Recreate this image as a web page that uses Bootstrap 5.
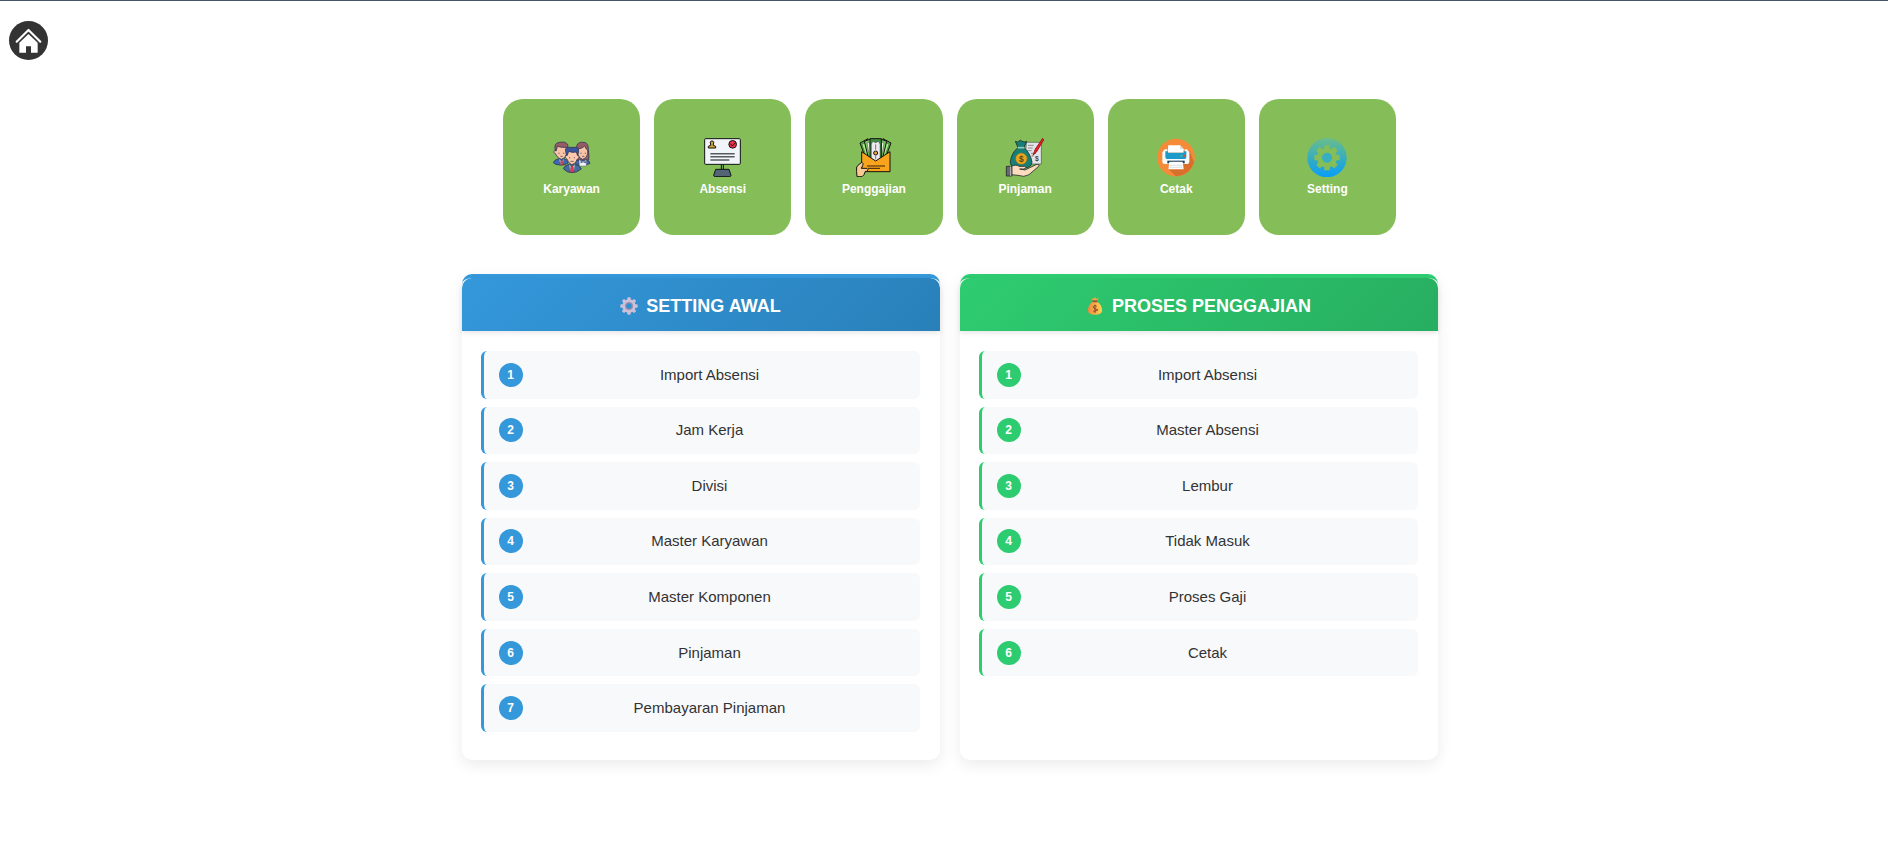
<!DOCTYPE html>
<html lang="id">
<head>
<meta charset="utf-8">
<meta name="viewport" content="width=device-width, initial-scale=1">
<title>Penggajian</title>
<link rel="stylesheet" href="https://cdn.jsdelivr.net/npm/bootstrap@5.3.0/dist/css/bootstrap.min.css">
<style>
  body { font-family: "Liberation Sans", Arial, sans-serif; color: #333; border-top: 1px solid #44546a; background: #fff; }
  .home-link { width: 40px; height: 40px; }
  .home-link svg, .tile-link svg { display: block; width: 40px; height: 40px; }
  .page-main { padding: 38px 0 40px 11px; }
  .tile-row { max-width: 893px; gap: 14px; }
  .tile-link { flex: 1 1 0; min-width: 100px; height: 136px; border-radius: 20px; background: #85bd58; color: #fff; gap: 3px; font-size: 12px; line-height: 18px; font-weight: 700; }
  .tile-link:hover { background: #79b04c; color: #fff; }
  .panel-row { max-width: 976px; gap: 20px; margin-top: 39px; }
  .panel { --tone: #3498db; --tone-dark: #2980b9; flex: 1 1 320px; border-top: 4px solid var(--tone); border-radius: 10px; box-shadow: 0 5px 15px rgba(0,0,0,.08); background: #fff; padding-bottom: 28px; }
  .panel-green { --tone: #2ecc71; --tone-dark: #27ae60; }
  .panel-title { min-height: 53px; padding-top: 2px; border-radius: 10px 10px 0 0; background: linear-gradient(135deg, var(--tone), var(--tone-dark)); box-shadow: 0 2px 5px rgba(0,0,0,.1); font-size: 18px; line-height: 22px; font-weight: 700; gap: 8px; }
  .panel-title svg { width: 18px; height: 18px; }
  .steps { display: grid; grid-template-rows: repeat(7, 1fr); gap: 8px; min-height: 381px; margin: 20px 20px 0 19px; }
  .step { border-left: 3px solid var(--tone); border-radius: 6px; background: #f8f9fb; padding: 0 23px 0 15px; font-size: 15px; line-height: 24px; }
  .step-no { width: 24px; height: 24px; background: var(--tone); font-size: 12px; }
</style>
</head>
<body>
<header class="d-flex px-2 pt-3 mt-1">
  <a class="home-link" href="#" aria-label="Beranda">
    <svg viewBox="24 63 120 120"><circle cx="85.500" cy="121.500" r="58.500" fill="#333"/><path d="M58 158V128L85.500 102 113 128V158H93V139H78V158Z" fill="#fff"/><path d="M50 125 85.500 90 121 125" fill="none" stroke="#fff" stroke-width="6.500" stroke-linecap="round" stroke-linejoin="round"/></svg>
  </a>
</header>
<main class="page-main">
  <nav class="tile-row d-flex mx-auto" aria-label="Menu utama">
    <a class="tile-link d-flex flex-column align-items-center justify-content-center text-decoration-none" href="#">
      <svg viewBox="50 36 120 120" stroke="#343a55" stroke-width="2.500" stroke-linejoin="round" aria-hidden="true">
        <path d="M54 113Q56 104 71 101H87Q97 105 99 114 86 122 73 120 60 120 54 113Z" fill="#3e67b5"/>
        <path d="M71 101 79 108 86 101 82 119H75Z" fill="#e5edf5" stroke-width="1"/><path d="M76 106H82L83 120H75Z" fill="#d94155" stroke-width="1"/>
        <path d="M61 77C53 74 55 86 62 88Q65 100 78 103 90 100 94 88C100 85 99 75 94 77V62H62Z" fill="#fbc4a6"/>
        <path d="M60 77Q54 53 73 52 91 48 98 60L96 75 92 67Q76 68 66 64L63 77Z" fill="#965b65"/>
        <path d="M119 114Q123 105 135 102H148Q162 105 164 115 151 124 131 121Z" fill="#3e67b5"/>
        <path d="M124 70C123 54 133 51 142 52 156 51 159 61 159 73Q162 96 160 105H124Z" fill="#965b65"/>
        <path d="M131 104 143 110 153 104V123H132Z" fill="#eef4f7" stroke-width="1"/><path d="m136 108 7 4 8-4v7l-8-4-7 4Z" fill="#343a55" stroke="none"/>
        <path d="M128 71Q140 72 148 63 153 75 157 75V87Q153 101 142 103 130 100 127 87Z" fill="#fbc4a6"/>
        <path d="M84 131Q86 122 101 118H120Q136 122 138 132 125 143 110 143 94 143 84 131Z" fill="#436ca0"/>
        <path d="M101 118 110 127 119 118 116 141H105Z" fill="#e5edf5" stroke-width="1"/><path d="M107 122H113L117 142H104Z" fill="#e03953" stroke-width="1"/>
        <path d="M94 91C87 89 90 102 95 102Q99 116 110 119 122 116 126 102C132 102 133 89 126 91V78H95Z" fill="#ffc9ac"/>
        <path d="M93 91 90 72Q94 65 106 67H124Q131 69 130 78L127 91 123 81Q109 84 100 79L96 91Z" fill="#3b569b"/>
        <path d="M71 83V87M85 83V87M137 83V87M150 83V87M103 96V100M117 96V100M105 109H115M75 94H82M140 94H147" fill="none" stroke-width="2"/>
      </svg>
      <span>Karyawan</span>
    </a>
    <a class="tile-link d-flex flex-column align-items-center justify-content-center text-decoration-none" href="#">
      <svg viewBox="54 36 120 120" stroke="#101216" stroke-width="3" stroke-linejoin="round" aria-hidden="true">
        <path d="M109 115V135M115 115V135" fill="none"/><path d="M92 133H132L138 151Q138 155 133 155H92Q86 155 86 151Z" fill="#536575"/>
        <rect x="59" y="41" width="107" height="77" rx="3" fill="#f1f5f9"/>
        <path d="M70 69V64L77 61V57Q73 48 81 48 89 48 85 57V61L92 64V69Z" fill="#d3a42d"/>
        <circle cx="143" cy="58" r="11.500" fill="#ee3048"/><path d="m136 57 6 5 10-9" fill="none"/>
        <path d="M76 86H149M76 95H149M76 105H133" fill="none" stroke="#575c63" stroke-width="4.500"/>
      </svg>
      <span>Absensi</span>
    </a>
    <a class="tile-link d-flex flex-column align-items-center justify-content-center text-decoration-none" href="#">
      <svg viewBox="49 36 120 120" stroke="#17130f" stroke-width="3" stroke-linejoin="round" aria-hidden="true">
        <path d="M67 54 91 41 108 103H85Z" fill="#4fae4c"/><path d="M160 54 136 41 119 103H142Z" fill="#4fae4c"/>
        <path d="M73 58 82 53 97 98H87ZM154 58 145 53 130 98H140Z" fill="#a5ed83" stroke-width="1"/>
        <path d="M80 49 99 42 109 107H94Z" fill="#79c761"/><path d="M147 49 128 42 119 107H133Z" fill="#79c761"/>
        <path d="M88 54 95 51 103 101H97ZM139 54 132 51 125 101H131Z" fill="#e4eddf" stroke-width="1"/>
        <path d="M97 41H131V98L114 110 97 98Z" fill="#3f8e43"/><path d="M106 49Q114 57 122 49L127 57V101L114 109 101 101V57Z" fill="#eceaf0" stroke-width="1"/>
        <path d="M114 58V74M114 92V103" fill="none" stroke="#777"/><circle cx="114" cy="84" r="6" fill="#eda62c"/>
        <path d="M72 80 114 108 157 80V140H72Z" fill="#faa41d"/>
        <path d="M88 123H142M91 130H127" fill="none" stroke="#38220d"/>
        <path d="M58 155Q56 139 57 126L65 117 73 112Q79 115 75 122L71 130H88Q94 134 88 139H83Q80 151 73 155Z" fill="#f8cb94"/>
      </svg>
      <span>Penggajian</span>
    </a>
    <a class="tile-link d-flex flex-column align-items-center justify-content-center text-decoration-none" href="#">
      <svg viewBox="52 36 120 120" stroke="#252b2e" stroke-width="2.500" stroke-linejoin="round" aria-hidden="true">
        <path d="M116 52H161V117H113Z" fill="#e3e6e9" stroke-width="1.500"/><path d="M121 61H138M121 69H135M119 77H132M130 85H145M131 93H138" fill="none" stroke="#777"/>
        <path d="m165 40-22 32-7 19 11-11 21-35Z" fill="#f31d24" stroke="#8a1019"/>
        <text x="142" y="109" font-size="20" font-weight="700" fill="#444" stroke="none">$</text>
        <path d="M91 68 83 49Q91 53 93 49 99 42 103 49 109 53 117 49L109 68Q128 84 133 111 132 128 110 129H82Q67 124 68 109 73 81 91 68Z" fill="#168078"/>
        <path d="M90 68H110" fill="none" stroke="#9bc6bd" stroke-width="5"/><circle cx="101" cy="101" r="17" fill="#eba51b" stroke="#9a741b" stroke-width="1.500"/>
        <text x="101" y="110" text-anchor="middle" font-size="25" font-weight="700" fill="#4c421b" stroke="none">$</text>
        <path d="M71 124Q86 117 94 124H111Q120 127 109 132H96L112 135 145 119Q157 116 153 124L124 149Q109 158 91 151L71 149Z" fill="#ffdcbf"/>
        <path d="M56 124H73V153H56Z" fill="#66686e"/><path d="M69 124V153" fill="none" stroke="#ccc"/>
      </svg>
      <span>Pinjaman</span>
    </a>
    <a class="tile-link d-flex flex-column align-items-center justify-content-center text-decoration-none" href="#">
      <svg viewBox="50 36 120 120" aria-hidden="true">
        <circle cx="110" cy="98" r="56.500" fill="#f58a38"/><path d="m151 78 13 34Q151 151 110 154L84 129Z" fill="#d8702c"/>
        <path d="M89 61H122L133 72V83H86V65Q86 61 89 61Z" fill="#fff"/><path d="M122 61V72H133Z" fill="#d7dee1"/>
        <path d="M76 73H84V86H136V73H143L150 82V110Q150 117 143 117H76Q69 117 69 110V82Z" fill="#f8fafb"/>
        <path d="M78 79H86V83H133V79H141V97Q141 102 136 102H83Q78 102 78 97Z" fill="#1b9bc9"/>
        <path d="M84 107H136V115H84Z" fill="#183f5c"/><path d="M90 110H130L133 133H87Z" fill="#fff"/><path d="M92 121H128M91 127H129" stroke="#c7d0d5" stroke-width="2"/>
        <circle cx="126" cy="92" r="3" fill="#79b347"/><circle cx="135" cy="92" r="3" fill="#ed4638"/>
      </svg>
      <span>Cetak</span>
    </a>
    <a class="tile-link d-flex flex-column align-items-center justify-content-center text-decoration-none" href="#">
      <svg viewBox="53 36 120 120" aria-hidden="true">
        <defs><linearGradient id="gearFade" x1="0" y1="0" x2="0" y2="1"><stop stop-color="#6abd8a"/><stop offset=".5" stop-color="#38aebe"/><stop offset="1" stop-color="#079dfb"/></linearGradient></defs>
        <circle cx="113" cy="98" r="59" fill="url(#gearFade)"/>
        <g fill="#85bd58"><circle cx="113" cy="98" r="30"/><g id="gearTeeth"><rect x="105" y="60" width="16" height="76" rx="2"/><rect x="75" y="90" width="76" height="16" rx="2"/></g><use href="#gearTeeth" transform="rotate(45 113 98)"/></g>
        <circle cx="113" cy="98" r="15" fill="#37afc0"/>
      </svg>
      <span>Setting</span>
    </a>
  </nav>

  <div class="panel-row d-flex flex-wrap mx-auto">
    <section class="panel">
      <h2 class="panel-title d-flex align-items-center justify-content-center text-white mb-0">
        <svg viewBox="0 0 54 54" aria-hidden="true"><g fill="#cdc1da"><circle cx="27" cy="27" r="20"/><g id="cogTeeth"><rect x="22" y="1" width="10" height="52" rx="3"/><rect x="1" y="22" width="52" height="10" rx="3"/></g><use href="#cogTeeth" transform="rotate(45 27 27)"/></g><circle cx="27" cy="27" r="10" fill="#2f91d0" stroke="#9d90b0" stroke-width="4"/></svg>
        <span>SETTING AWAL</span>
      </h2>
      <ol class="steps list-unstyled mb-0">
        <li class="step d-flex align-items-center"><span class="step-no rounded-circle d-flex align-items-center justify-content-center text-white fw-bold">1</span><span class="flex-fill text-center">Import Absensi</span></li>
        <li class="step d-flex align-items-center"><span class="step-no rounded-circle d-flex align-items-center justify-content-center text-white fw-bold">2</span><span class="flex-fill text-center">Jam Kerja</span></li>
        <li class="step d-flex align-items-center"><span class="step-no rounded-circle d-flex align-items-center justify-content-center text-white fw-bold">3</span><span class="flex-fill text-center">Divisi</span></li>
        <li class="step d-flex align-items-center"><span class="step-no rounded-circle d-flex align-items-center justify-content-center text-white fw-bold">4</span><span class="flex-fill text-center">Master Karyawan</span></li>
        <li class="step d-flex align-items-center"><span class="step-no rounded-circle d-flex align-items-center justify-content-center text-white fw-bold">5</span><span class="flex-fill text-center">Master Komponen</span></li>
        <li class="step d-flex align-items-center"><span class="step-no rounded-circle d-flex align-items-center justify-content-center text-white fw-bold">6</span><span class="flex-fill text-center">Pinjaman</span></li>
        <li class="step d-flex align-items-center"><span class="step-no rounded-circle d-flex align-items-center justify-content-center text-white fw-bold">7</span><span class="flex-fill text-center">Pembayaran Pinjaman</span></li>
      </ol>
    </section>
    <section class="panel panel-green">
      <h2 class="panel-title d-flex align-items-center justify-content-center text-white mb-0">
        <svg viewBox="0 0 54 54" aria-hidden="true"><defs><linearGradient id="bagGold"><stop stop-color="#ef8742"/><stop offset="1" stop-color="#ffd34f"/></linearGradient></defs><path d="m20 11-3-7 7 1 3-5 4 5 7-1-4 7Z" fill="#f3a742"/><path d="M20 14C9 22 5 32 6 42Q7 53 27 53T48 42C49 30 44 21 34 14Z" fill="url(#bagGold)"/><path d="M20 13H34" stroke="#9b563b" stroke-width="6"/><path d="M32 28Q23 23 22 29T32 37 22 43M27 23V48" fill="none" stroke="#85472e" stroke-width="3"/></svg>
        <span>PROSES PENGGAJIAN</span>
      </h2>
      <ol class="steps list-unstyled mb-0">
        <li class="step d-flex align-items-center"><span class="step-no rounded-circle d-flex align-items-center justify-content-center text-white fw-bold">1</span><span class="flex-fill text-center">Import Absensi</span></li>
        <li class="step d-flex align-items-center"><span class="step-no rounded-circle d-flex align-items-center justify-content-center text-white fw-bold">2</span><span class="flex-fill text-center">Master Absensi</span></li>
        <li class="step d-flex align-items-center"><span class="step-no rounded-circle d-flex align-items-center justify-content-center text-white fw-bold">3</span><span class="flex-fill text-center">Lembur</span></li>
        <li class="step d-flex align-items-center"><span class="step-no rounded-circle d-flex align-items-center justify-content-center text-white fw-bold">4</span><span class="flex-fill text-center">Tidak Masuk</span></li>
        <li class="step d-flex align-items-center"><span class="step-no rounded-circle d-flex align-items-center justify-content-center text-white fw-bold">5</span><span class="flex-fill text-center">Proses Gaji</span></li>
        <li class="step d-flex align-items-center"><span class="step-no rounded-circle d-flex align-items-center justify-content-center text-white fw-bold">6</span><span class="flex-fill text-center">Cetak</span></li>
      </ol>
    </section>
  </div>
</main>
<script src="https://cdn.jsdelivr.net/npm/bootstrap@5.3.0/dist/js/bootstrap.bundle.min.js"></script>
</body>
</html>
